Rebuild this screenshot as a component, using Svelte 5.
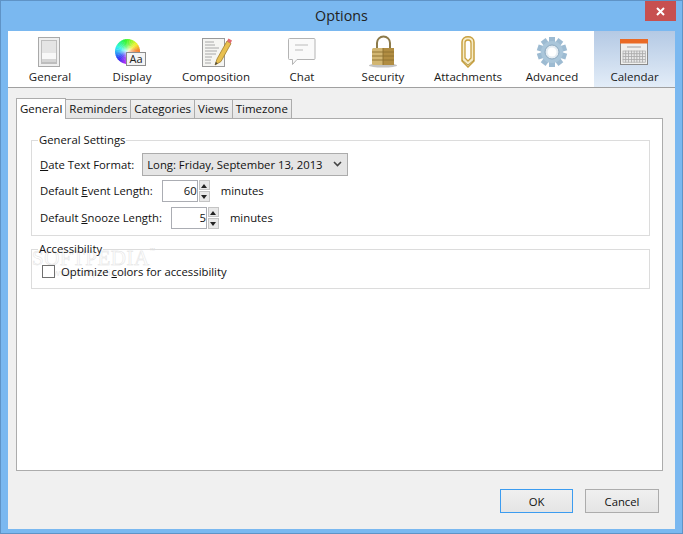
<script>
  const toolbar = [
    { id: 'general', label: 'General', width: 84 },
    { id: 'display', label: 'Display', width: 80 },
    { id: 'composition', label: 'Composition', width: 88 },
    { id: 'chat', label: 'Chat', width: 84 },
    { id: 'security', label: 'Security', width: 78 },
    { id: 'attachments', label: 'Attachments', width: 92 },
    { id: 'advanced', label: 'Advanced', width: 76 }
  ];
  const tabs = ['General', 'Reminders', 'Categories', 'Views', 'Timezone'];
  const gearTeeth = [0, 36, 72, 108, 144, 180, 216, 252, 288, 324];
  const calCols = [0, 1, 2, 3, 4, 5, 6, 7];
  const calRows = [0, 1, 2, 3];

  // colour wheel wedges, hue runs clockwise from orange on the right
  const wedges = Array.from({ length: 36 }, (_, i) => {
    const a0 = (i * 10 * Math.PI) / 180;
    const a1 = ((i + 1.2) * 10 * Math.PI) / 180;
    const r = 12.5;
    return {
      d: `M0 0L${(r * Math.cos(a0)).toFixed(2)} ${(r * Math.sin(a0)).toFixed(2)}L${(r * Math.cos(a1)).toFixed(2)} ${(r * Math.sin(a1)).toFixed(2)}Z`,
      fill: `hsl(${(15 - i * 10 + 360) % 360}, 90%, 55%)`
    };
  });
</script>

<div class="window">
  <header class="titlebar">
    <span class="title">Options</span>
    <button class="close" aria-label="Close">
      <svg width="9" height="9" viewBox="0 0 9 9"><path d="M1 1l7 7M8 1l-7 7" stroke="#fff" stroke-width="2" /></svg>
    </button>
  </header>

  <main class="client">
    <nav class="toolbar">
      {#each toolbar as item}
        <div class="tool" style="width: {item.width}px">
          <svg class="icon" width="40" height="34" viewBox="0 0 40 34">
            {#if item.id === 'general'}
              <rect x="8.5" y="3.500" width="21" height="29" fill="#efefef" stroke="#a9a9a9" />
              <rect x="11" y="6" width="16" height="24" fill="#bdbdbd" />
              <rect x="12" y="7" width="14" height="12" fill="#e4e4e4" />
              <rect x="12" y="19" width="14" height="6" fill="#f8f8f8" />
              <rect x="12" y="25" width="14" height="3" fill="#d4d4d4" />
            {:else if item.id === 'display'}
              <defs>
                <radialGradient id="wheelGlow">
                  <stop offset="0" stop-color="#fff" stop-opacity="0.8" />
                  <stop offset="0.5" stop-color="#fff" stop-opacity="0.2" />
                  <stop offset="1" stop-color="#fff" stop-opacity="0" />
                </radialGradient>
              </defs>
              <g transform="translate(15.500,17.500)">
                {#each wedges as w}
                  <path d={w.d} fill={w.fill} />
                {/each}
                <circle r="12.500" fill="url(#wheelGlow)" />
              </g>
              <rect x="15" y="19" width="19" height="13" fill="#b8b8b8" />
              <rect x="14.500" y="18.500" width="19" height="13" fill="#f4f4f4" stroke="#8c8c8c" />
              <text x="24" y="29" class="aa">Aa</text>
            {:else if item.id === 'composition'}
              <rect x="6.500" y="4.500" width="22" height="28" fill="#f5f5f2" stroke="#9a9a9a" />
              <path d="M9 8h9M9 11h10M9 14h14M9 17h12M9 20h11M9 23h7M9 26h6M9 29h6" stroke="#a8a8a8" />
              <path d="M19 31l2-6 10-18 4 2.500-10 18z" fill="#e8c050" stroke="#a07c28" stroke-width="0.8" />
              <path d="M19 31l0.800-3 2 1.200z" fill="#444" />
              <path d="M31 7l1.500-2.500 3.500 2-1.500 3z" fill="#e06a70" />
            {:else if item.id === 'chat'}
              <path d="M7.500 4.500q-1 0-1 1v19q0 1 1 1h3v5l4.500-5h17q1 0 1-1v-19q0-1-1-1z" fill="#fafafa" stroke="#b4b4b4" />
              <path d="M13 11h13M13 16h8" stroke="#bcbcbc" />
            {:else if item.id === 'security'}
              <ellipse cx="20" cy="31.500" rx="14" ry="2" fill="#888" opacity="0.5" />
              <path d="M14 14V9a6.500 6.500 0 0 1 13 0v5" fill="none" stroke="#8c7a4a" stroke-width="2" />
              <rect x="9" y="14" width="22" height="17" rx="1.500" fill="#d2b672" />
              <rect x="20" y="14" width="11" height="17" fill="#b18d42" />
              <path d="M9 18h22M9 22h22M9 26h22M20 14v17" stroke="#8c6f30" stroke-width="0.9" />
            {:else if item.id === 'attachments'}
              <path d="M14 27V8c0-7 12-7 12 0v19l-6 6z" fill="#f6ecc8" stroke="#c8a040" stroke-width="1.500" />
              <path d="M17 24V9c0-4 6-4 6 0v15l-3 3z" fill="#fff" stroke="#c8a040" stroke-width="1.300" />
              <path d="M14 26l6 5 6-5" fill="none" stroke="#a88a30" stroke-width="0.800" />
            {:else if item.id === 'advanced'}
              <g transform="translate(20,18)">
                {#each gearTeeth as a}
                  <rect x="-3" y="-15" width="6" height="6" fill="#9dbbd2" transform="rotate({a})" />
                {/each}
                <circle r="11" fill="#aac6da" />
                <circle r="7" fill="#e4ecf2" stroke="#8ba8bf" />
                <circle r="4.500" fill="#fff" />
              </g>
            {/if}
          </svg>
          <span>{item.label}</span>
        </div>
      {/each}
      <div class="tool selected">
        <svg class="icon" width="40" height="34" viewBox="0 0 40 34">
          <rect x="5.500" y="5.500" width="27" height="25" fill="#f0f0ee" stroke="#8a8a8a" />
          <rect x="5" y="5" width="28" height="4.500" fill="#ea6a24" />
          <rect x="12" y="12" width="14" height="2" fill="#c8c8c8" />
          {#each calCols as c}
            {#each calRows as r}
              <rect x={8 + c * 2.800} y={17 + r * 2.800} width="2.800" height="2.800" fill="#e8e8e8" stroke="#aaa" stroke-width="0.700" />
            {/each}
          {/each}
        </svg>
        <span>Calendar</span>
      </div>
    </nav>

    <section class="body">
      <div class="tabs">
        {#each tabs as tab, i}
          <div class="tab" class:active={i === 0}>{tab}</div>
        {/each}
      </div>

      <div class="panel">
        <div class="watermark">SOFTPEDIA<sup>™</sup></div>
        <div class="watermark-url">www.softpedia.com</div>

        <fieldset class="group">
          <legend>General Settings</legend>
          <div class="row">
            <span class="label first"><u>D</u>ate Text Format:</span>
            <div class="select">
              <span>Long: Friday, September 13, 2013</span>
              <svg width="9" height="6" viewBox="0 0 9 6"><path d="M1 1l3.500 3.500L8 1" fill="none" stroke="#444" stroke-width="1.600" /></svg>
            </div>
          </div>
          <div class="row">
            <span class="label">Default <u>E</u>vent Length:</span>
            <div class="spinner">
              <div class="value">60</div>
              <div class="spin">
                <div class="up"></div>
                <div class="down"></div>
              </div>
            </div>
            <span class="unit">minutes</span>
          </div>
          <div class="row">
            <span class="label">Default <u>S</u>nooze Length:</span>
            <div class="spinner">
              <div class="value">5</div>
              <div class="spin">
                <div class="up"></div>
                <div class="down"></div>
              </div>
            </div>
            <span class="unit">minutes</span>
          </div>
        </fieldset>

        <fieldset class="group second">
          <legend>Accessibility</legend>
          <div class="check-row">
            <div class="checkbox"></div>
            <span>Optimize <u>c</u>olors for accessibility</span>
          </div>
        </fieldset>
      </div>

      <footer class="buttons">
        <button class="btn default">OK</button>
        <button class="btn">Cancel</button>
      </footer>
    </section>
  </main>
</div>

<style>
  :global(body) {
    margin: 0;
  }

  .window {
    box-sizing: border-box;
    width: 683px;
    height: 534px;
    display: flex;
    flex-direction: column;
    padding: 0 7px 4px 7px;
    background: #7ab8f0;
    border: 1px solid #5f93c6;
    font-family: "Open Sans", "Noto Sans", sans-serif;
    font-size: 11.3px;
    color: #111;
    position: relative;
  }

  .titlebar {
    height: 30px;
    flex: none;
    display: flex;
    justify-content: center;
    align-items: center;
    padding-bottom: 2px;
    box-sizing: border-box;
  }

  .title {
    font-size: 14.3px;
    color: #222;
  }

  .close {
    position: absolute;
    top: 0;
    right: 6px;
    width: 31px;
    height: 20px;
    padding: 0;
    border: 0;
    background: #c75050;
    display: flex;
    align-items: center;
    justify-content: center;
  }

  .client {
    flex: 1;
    display: flex;
    flex-direction: column;
    background: #f0f0f0;
    min-height: 0;
  }

  .toolbar {
    flex: none;
    height: 56px;
    display: flex;
    justify-content: flex-start;
    background: #fff;
    border-bottom: 1px solid #a0a0a0;
    font-size: 11.5px;
  }

  .tool {
    flex: none;
    display: flex;
    flex-direction: column;
    align-items: center;
    height: 56px;
    padding-top: 3px;
    box-sizing: border-box;
    line-height: 16px;
    white-space: nowrap;
    color: #1a1a1a;
  }

  .icon {
    display: block;
    height: 34px;
    margin-bottom: 1px;
  }

  .aa {
    font-size: 11px;
    fill: #222;
    text-anchor: middle;
    font-family: "Open Sans", sans-serif;
  }

  .selected {
    width: 81px;
    margin-left: 4px;
    background: linear-gradient(#b4c9e4, #e3edf8);
  }

  .body {
    flex: 1;
    display: flex;
    flex-direction: column;
    padding: 9px 12px 16px 8px;
    min-height: 0;
  }

  .tabs {
    display: flex;
    height: 21px;
    align-items: flex-end;
    flex: none;
    position: relative;
    z-index: 1;
    font-size: 11.5px;
  }

  .tab {
    box-sizing: border-box;
    height: 19px;
    padding: 0 3px;
    line-height: 18px;
    background: linear-gradient(#f0f0f0, #e5e5e5);
    border: 1px solid #acacac;
    border-bottom: 0;
    border-left: 0;
    white-space: nowrap;
  }

  .tab.active {
    height: 21px;
    line-height: 19px;
    padding: 0 3px;
    background: #fff;
    border-left: 1px solid #acacac;
    margin-bottom: -1px;
  }

  .panel {
    flex: 1;
    box-sizing: border-box;
    background: #fff;
    border: 1px solid #acacac;
    padding: 13px 12px 0 14px;
    position: relative;
    min-height: 0;
  }

  .group {
    margin: 0;
    padding: 3px 0 0 8px;
    border: 1px solid #dcdcdc;
    height: 104px;
    box-sizing: border-box;
    position: relative;
  }

  .second {
    margin-top: 5px;
    height: 48px;
    padding-top: 6px;
  }

  legend {
    padding: 0 1px;
    margin-left: -2px;
    line-height: 16px;
  }

  .row {
    display: flex;
    align-items: center;
    height: 26px;
  }

  .row + .row {
    height: 27px;
  }

  .label {
    margin-right: 9px;
    white-space: nowrap;
  }

  .label.first {
    margin-right: 8px;
  }

  .select {
    box-sizing: border-box;
    width: 206px;
    height: 23px;
    display: flex;
    align-items: center;
    justify-content: space-between;
    padding: 0 5px 0 4px;
    background: #e5e5e5;
    border: 1px solid #acacac;
    white-space: nowrap;
  }

  .spinner {
    display: flex;
    height: 22px;
    align-items: stretch;
  }

  .value {
    box-sizing: border-box;
    width: 36px;
    border: 1px solid #abadb3;
    text-align: right;
    line-height: 20px;
    padding-right: 0;
  }

  .spin {
    display: flex;
    flex-direction: column;
    width: 11px;
    margin-left: 1px;
    gap: 1px;
  }

  .up,
  .down {
    flex: 1;
    background: #e8e8e8;
    border: 1px solid #c4c4c4;
    position: relative;
  }

  .up::after,
  .down::after {
    content: '';
    position: absolute;
    left: 1px;
    width: 0;
    height: 0;
    border-left: 3.500px solid transparent;
    border-right: 3.500px solid transparent;
  }

  .up::after {
    top: 3px;
    border-bottom: 4px solid #222;
  }

  .down::after {
    top: 3px;
    border-top: 4px solid #222;
  }

  .unit {
    margin-left: 11px;
  }

  .check-row {
    display: flex;
    align-items: center;
    gap: 6px;
    margin-left: 2px;
    height: 16px;
  }

  .checkbox {
    box-sizing: border-box;
    width: 13px;
    height: 13px;
    border: 1px solid #707070;
    background: #fff;
  }

  .watermark {
    position: absolute;
    left: 15px;
    top: 119px;
    font-family: "Liberation Serif", serif;
    font-size: 21px;
    letter-spacing: 0.5px;
    line-height: 25px;
    color: #fff;
    -webkit-text-stroke: 0.5px #e2e2e2;
  }

  .watermark sup {
    font-size: 7px;
    vertical-align: 12px;
    font-family: "Open Sans", sans-serif;
    -webkit-text-stroke: 0;
    color: #ddd;
  }

  .watermark-url {
    position: absolute;
    left: 36px;
    top: 148px;
    font-size: 9px;
    line-height: 12px;
    color: #e9e9e9;
  }

  .buttons {
    flex: none;
    display: flex;
    justify-content: flex-end;
    gap: 12px;
    padding-top: 18px;
    padding-right: 4px;
  }

  .btn {
    box-sizing: border-box;
    width: 74px;
    height: 24px;
    padding: 0;
    font: inherit;
    color: #111;
    background: linear-gradient(#f0f0f0, #e5e5e5);
    border: 1px solid #acacac;
  }

  .default {
    width: 73px;
    border-color: #3c9cf0;
  }
</style>
